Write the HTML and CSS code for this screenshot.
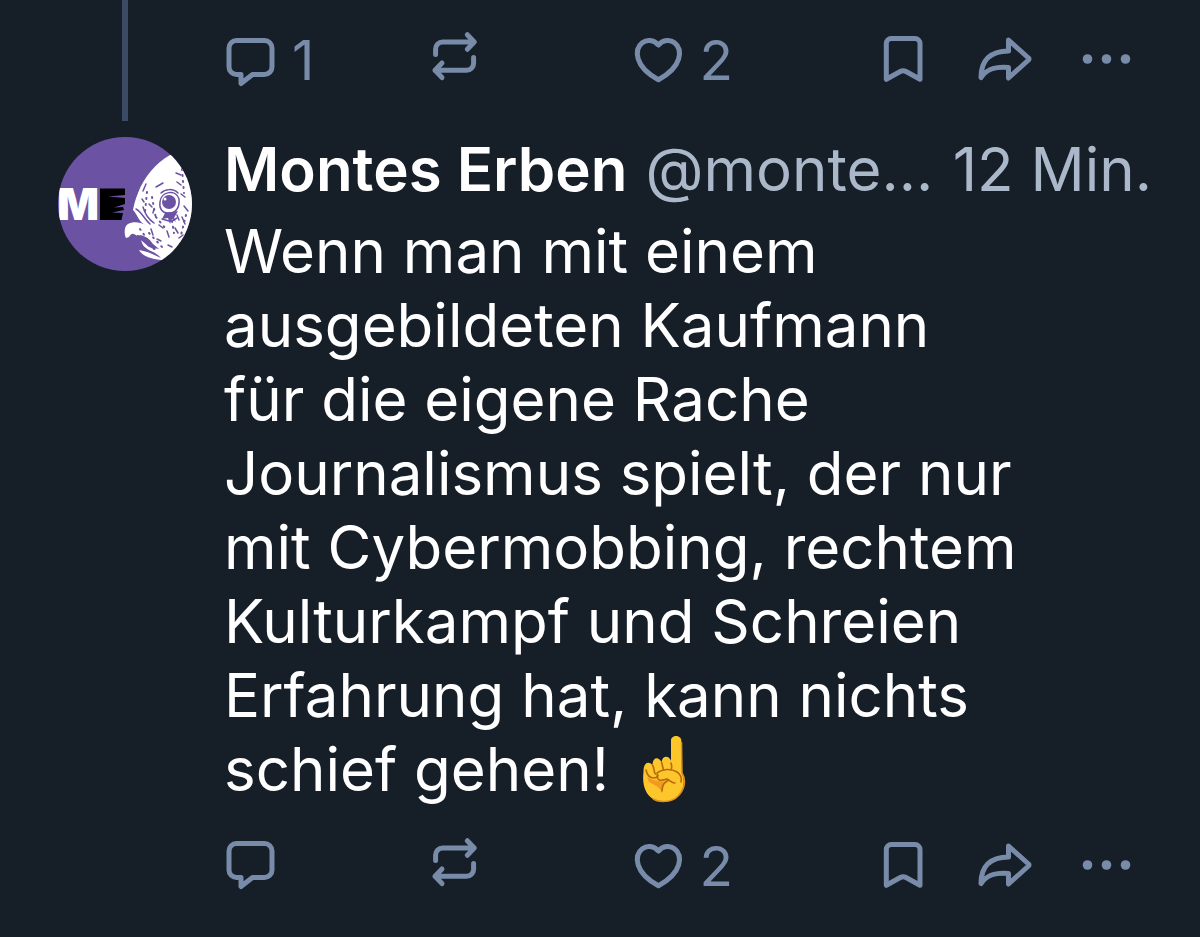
FILE: index.html
```html
<!DOCTYPE html>
<html lang="de">
<head>
  <meta charset="UTF-8" />
  <meta name="viewport" content="width=device-width, initial-scale=1.0" />
  <title>Montes Erben</title>
  <link rel="stylesheet" href="styles.css">
</head>
<body>
  <!-- Icons shared by both action rows -->
  <svg class="sprite" aria-hidden="true">
    <symbol id="reply" viewBox="0 0 58 58">
      <path d="M14.500 6.500h28a7.500 7.500 0 0 1 7.500 7.500v19a7.500 7.500 0 0 1-7.500 7.500H30.500L19 49.500V40.500H14.500A7.500 7.500 0 0 1 7 33V14a7.500 7.500 0 0 1 7.500-7.500z"/>
    </symbol>
    <symbol id="repost" viewBox="0 0 58 58">
      <path d="M9.600 23.500V18a7 7 0 0 1 7-7H48M41.300 3.700 48.300 11l-7 7.300M47.600 26.500V32.300a7 7 0 0 1-7 7H9M16 32l-7 7.300L16 46.600"/>
    </symbol>
    <symbol id="like" viewBox="0 0 58 58">
      <path d="M28.400 11C23.500 5.500 16.500 5.500 12.300 8.700 7.500 12.400 6.300 18.500 8.200 25c2.400 8 9.700 15 20.200 20.800C38.900 40 46.200 33 48.600 25c1.900-6.500.7-12.600-4.100-16.300-4.200-3.200-11.200-3.200-16.100 2.300z"/>
    </symbol>
    <symbol id="save" viewBox="0 0 58 58">
      <path d="M17.300 7.500H41a5 5 0 0 1 5 5v35.800L32 40.500a6 6 0 0 0-5.700 0L12.300 48.300V12.500a5 5 0 0 1 5-5z"/>
    </symbol>
    <symbol id="share" viewBox="0 0 58 58">
      <path d="M32.500 9 52.500 27a1.500 1.500 0 0 1 0 2L32.500 47V36.500C20 35.500 11 37.500 5 46.500 5 29.500 14 20 32.500 20z"/>
    </symbol>
    <symbol id="more" viewBox="0 0 58 58">
      <g class="dots"><circle cx="9.500" cy="28" r="4.800"/><circle cx="28.500" cy="28" r="4.800"/><circle cx="47.500" cy="28" r="4.800"/></g>
    </symbol>
  </svg>

  <main class="thread">
    <!-- End of the previous post -->
    <article class="post post-prev">
      <div class="side"><div class="line"></div></div>
      <div class="content">
        <div class="actions">
          <button class="action" aria-label="Antworten"><svg class="icon"><use href="#reply"/></svg><span class="count">1</span></button>
          <button class="action" aria-label="Reposten"><svg class="icon"><use href="#repost"/></svg></button>
          <button class="action" aria-label="Gefällt mir"><svg class="icon"><use href="#like"/></svg><span class="count">2</span></button>
          <button class="action" aria-label="Speichern"><svg class="icon"><use href="#save"/></svg></button>
          <button class="action" aria-label="Teilen"><svg class="icon"><use href="#share"/></svg></button>
          <button class="action" aria-label="Mehr"><svg class="icon"><use href="#more"/></svg></button>
        </div>
      </div>
    </article>

    <article class="post">
      <div class="side">
        <svg class="avatar" viewBox="0 0 134 134" role="img" aria-label="Montes Erben">
          <defs><clipPath id="round"><circle cx="67" cy="67" r="67"/></clipPath></defs>
          <g clip-path="url(#round)">
            <rect width="134" height="134" fill="#6b52a3"/>
            <text class="avatar-letter" x="-1" y="83">M</text>
            <path d="M42 51.500h25v6.500l-17 1.500 17 1.500v6l-11 3.500 9-.5 1 3-12 2.500 11 .5-1.500 7H42z"/>
            <!-- bird head -->
            <path fill="#fff" d="M112 18C98 26 86 40 80 56c-3 7-4 12-5 17 5 5 6 13 13 15-6-3-13-4-18-1-4 2-4 10-2 14l3-1c3-5 5-3 8-1 6 4 4 9 9 12 5 4 10 4 15 10-7-3-14-7-22-8 3 6 12 9 23 10l30-10V18z"/>
            <g fill="none" stroke="#6b52a3" stroke-width="1.500" stroke-linecap="round">
              <path d="M102 65c1-11 16-13 19-3 1 9-4 15-11 14-6 0-9-5-8-11z"/>
              <path d="M103 56c4-4 12-5 17 0M78 72c5 2 9 11 14 15M85 70c2 7 5 12 11 16"/>
              <path d="M98 50l7-4M88 47l-3 7M84 62l2 3M91 67l3 3M96 72l-1 4M118 36l5 2M119 45l4 3M123 57l4 3M126 69l4 5M119 78l2 5"/>
              <path d="M83 99l5 6M93 92l2 6M101 88l4 3M109 94l2 6M99 102l4 2M117 91l3 5M110 108l4 2M90 108l7 4M104 82l7 2M114 84l5-3M124 80l3 7M121 101l4-3"/>
              <path stroke-dasharray="1 5" stroke-width="2" d="M89 55l-2 20M94 60l4 22M98 80l10 12M91 96l13 14M113 78l3 18M124 32l2 24M128 78l-5 20M82 92l14 20"/>
            </g>
            <circle cx="111" cy="65" r="7" fill="#6b52a3"/>
            <circle cx="107" cy="62" r="1.500" fill="#fff"/>
            <path fill="#6b52a3" d="M107 76l13-2-4 7 2 4-4-3-2 5-2-6-6 1zM79 98c7 0 12 3 16 9l6 5-10-2-7-6-6-3z"/>
          </g>
        </svg>
      </div>
      <div class="content">
        <header class="meta">
          <a class="name" href="#">Montes Erben</a>
          <a class="handle" href="#">@monte...</a>
          <a class="time" href="#">12 Min.</a>
        </header>
        <p class="text">Wenn man mit einem<br>ausgebildeten Kaufmann<br>für die eigene Rache<br>Journalismus spielt, der nur<br>mit Cybermobbing, rechtem<br>Kulturkampf und Schreien<br>Erfahrung hat, kann nichts<br>schief gehen!
          <svg class="emoji" viewBox="0 0 74 74" role="img" aria-label="Zeigefinger nach oben">
            <path fill="#fdc62b" d="M45 39V8.500c0-6 10-6 10.300 0L56 42c4 8 1 17-5 23-6 6-17 6-24 2-8-5-11-15-9.500-27 0-10 5-11 9-7 0-8 6-9 9-3 1-7 8-7 10 0z"/>
            <path fill="#f19a20" d="M21 45c7 5 16 4 22 5-7 1-6 6-7 12-1-7-8-9-13-12z"/>
            <g fill="none" stroke="#b8690f" stroke-width="1.600" stroke-linecap="round" stroke-linejoin="round">
              <path d="M26.500 33c2 3 1 7 3 9M35.500 30c1 3 1 5 2 8M45 31c1 3 1 5 0 7"/>
              <path d="M20 38c1 5 3 8 8 8 3 0 4-2 3-5 5-4 14-5 20-1 3 2 5 6 4 10M32 43c-2 6 3 6 9 4 3 1 4 4 8 4M43 48c-5 2-7 6-7 11"/>
            </g>
            <path fill="none" stroke="#dd901d" stroke-width="1.500" d="M55.500 10l.5 31c5 8 2 18-5 24-5 5-17 6-24 2"/>
          </svg></p>
        <div class="actions">
          <button class="action" aria-label="Antworten"><svg class="icon"><use href="#reply"/></svg></button>
          <button class="action" aria-label="Reposten"><svg class="icon"><use href="#repost"/></svg></button>
          <button class="action" aria-label="Gefällt mir"><svg class="icon"><use href="#like"/></svg><span class="count">2</span></button>
          <button class="action" aria-label="Speichern"><svg class="icon"><use href="#save"/></svg></button>
          <button class="action" aria-label="Teilen"><svg class="icon"><use href="#share"/></svg></button>
          <button class="action" aria-label="Mehr"><svg class="icon"><use href="#more"/></svg></button>
        </div>
      </div>
    </article>
  </main>
</body>
</html>
```
FILE: styles.css
```css
* {
  box-sizing: border-box;
}
body {
  margin: 0;
  background: #161e28;
  color: #fff;
  font-family: Inter, sans-serif;
  font-size: 60px;
  line-height: 74px;
  font-optical-sizing: none;
}
a {
  color: inherit;
  text-decoration: none;
}
.sprite {
  display: none;
}
.post {
  display: flex;
  gap: 32px;
  padding: 11px 48px 34px 58px;
}
.post-prev {
  padding-top: 0;
  padding-bottom: 0;
}
.side {
  flex: 0 0 134px;
  display: flex;
  justify-content: center;
  align-items: flex-start;
}
.content {
  flex: 1;
  min-width: 0;
}
.line {
  width: 6px;
  align-self: stretch;
  background: #3b4b63;
}
.post-prev .actions {
  margin-top: 31px;
  margin-bottom: 26px;
}
.avatar {
  width: 134px;
  height: 134px;
  margin-top: 5px;
}
.avatar-letter {
  font-size: 44px;
  font-weight: 900;
  fill: #fff;
}
.meta {
  display: flex;
  white-space: nowrap;
}
.name {
  font-weight: 600;
}
.handle {
  margin-left: 18px;
}
.time {
  margin-left: auto;
}
.handle,
.time {
  color: #abb8c9;
}
.text {
  margin: 8px 0 31px;
}
.emoji {
  width: 74px;
  height: 74px;
  vertical-align: top;
}
.actions {
  display: grid;
  grid-template-columns: 2fr 2fr 2.4fr 1fr 1fr 58px;
  align-items: start;
  margin: 0 16px 0 -2px;
}
.action {
  display: flex;
  align-items: center;
  gap: 12px;
  padding: 0;
  border: none;
  background: none;
  color: #788ca9;
  font: inherit;
  cursor: pointer;
}
.icon {
  width: 58px;
  height: 58px;
  fill: none;
  stroke: currentColor;
  stroke-width: 5;
  stroke-linecap: round;
  stroke-linejoin: round;
}
.dots {
  fill: currentColor;
  stroke: none;
}
.count {
  padding-bottom: 6px;
  font-size: 55px;
  line-height: 58px;
}
```
